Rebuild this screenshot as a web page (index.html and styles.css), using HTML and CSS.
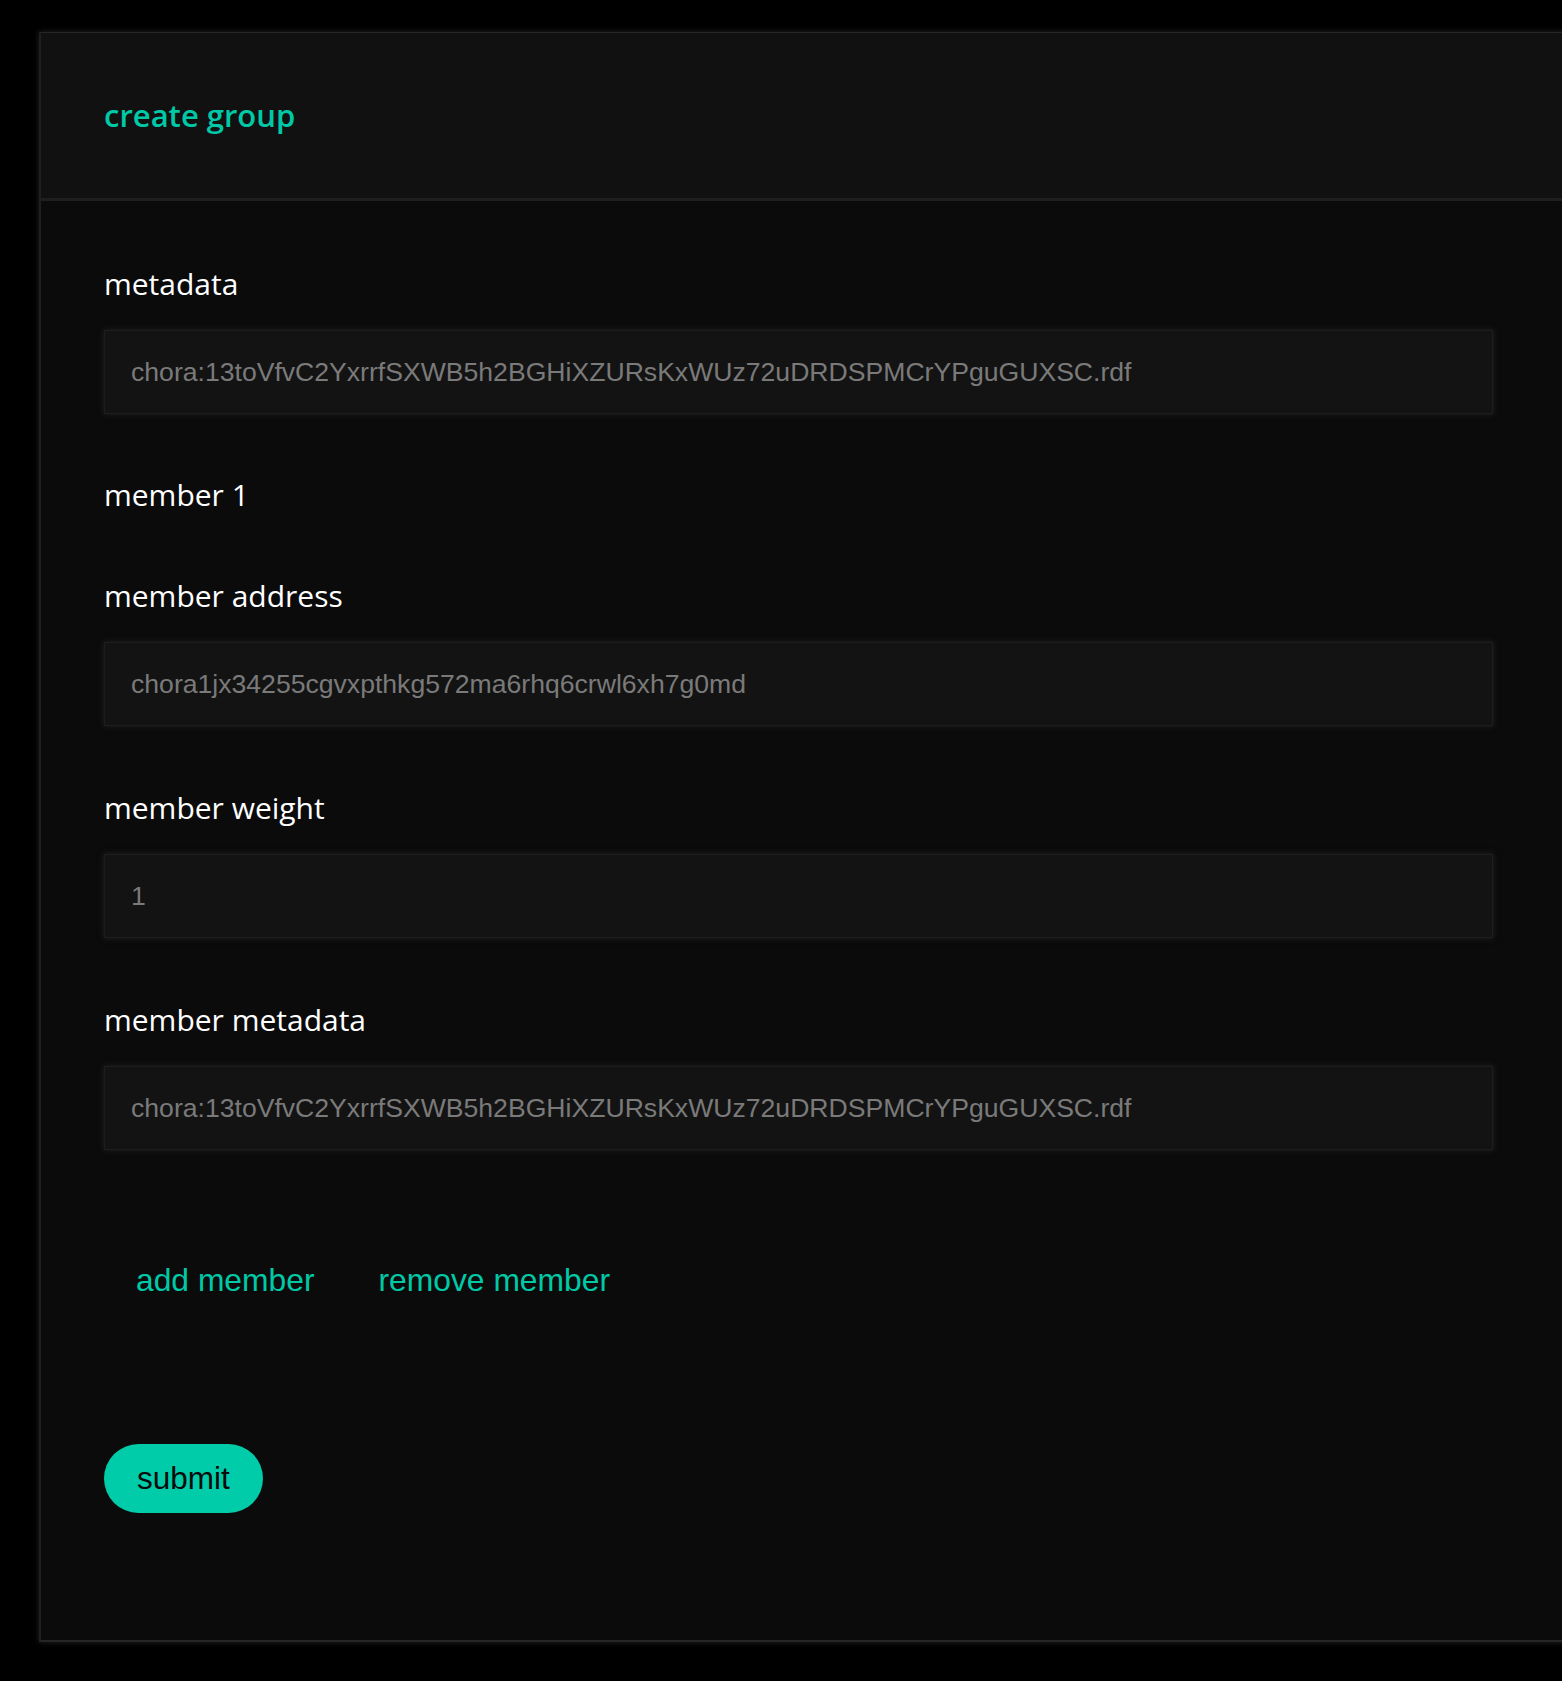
FILE: index.html
```html
<!DOCTYPE html>
<html lang="en">
<head>
<meta charset="utf-8">
<title>create group</title>
<link rel="stylesheet" href="styles.css">
</head>
<body>
<div class="panel">
  <div class="panel-header">
    <h2 class="panel-title">create group</h2>
  </div>
  <form class="panel-body">
    <div class="field">
      <label class="field-label">metadata</label>
      <input class="field-input" type="text" placeholder="chora:13toVfvC2YxrrfSXWB5h2BGHiXZURsKxWUz72uDRDSPMCrYPguGUXSC.rdf">
    </div>
    <div class="member-title">member 1</div>
    <div class="field field-first">
      <label class="field-label">member address</label>
      <input class="field-input" type="text" placeholder="chora1jx34255cgvxpthkg572ma6rhq6crwl6xh7g0md">
    </div>
    <div class="field">
      <label class="field-label">member weight</label>
      <input class="field-input" type="text" placeholder="1">
    </div>
    <div class="field">
      <label class="field-label">member metadata</label>
      <input class="field-input" type="text" placeholder="chora:13toVfvC2YxrrfSXWB5h2BGHiXZURsKxWUz72uDRDSPMCrYPguGUXSC.rdf">
    </div>
    <div class="member-actions">
      <button type="button" class="text-button">add member</button>
      <button type="button" class="text-button">remove member</button>
    </div>
    <button type="button" class="submit-button">submit</button>
  </form>
</div>
</body>
</html>
```
FILE: styles.css
```css
html, body {
  margin: 0;
  padding: 0;
  background: #000;
  overflow: hidden;
}

body {
  padding: 32px 0 40px 39px;
}

.panel {
  width: 1600px;
  border-top: 1px solid #262626;
  border-left: 2px solid #1f1f1f;
  border-bottom: 2px solid #262626;
  box-shadow: 0 0 6px rgba(60, 60, 60, 0.6);
}

.panel-header {
  background: #111111;
  height: 168px;
  padding: 0 63px 2px;
  box-sizing: border-box;
  display: flex;
  align-items: center;
  border-bottom: 3px solid #1f1f1f;
}

.panel-title {
  margin: 0;
  font-family: "Open Sans", "Noto Sans", sans-serif;
  font-weight: 600;
  font-size: 31px;
  color: #00c9a7;
  line-height: 40px;
}

.panel-body {
  display: flex;
  flex-direction: column;
  align-items: flex-start;
  background: #0b0b0b;
  padding: 1px 63px 127px;
}

.field {
  display: flex;
  flex-direction: column;
  margin-top: 62px;
}

.field-first {
  margin-top: 61px;
}

.field-label,
.member-title {
  font-family: "Open Sans", "Noto Sans", sans-serif;
  font-size: 30px;
  line-height: 40px;
  color: #ffffff;
  margin-bottom: 26px;
}

.member-title {
  margin-top: 61px;
  margin-bottom: 0;
}

.field-input {
  box-sizing: border-box;
  width: 1389px;
  height: 84px;
  margin: 0;
  padding: 0 26px;
  background: #131313;
  border: 1px solid #1d1d1d;
  box-shadow: 0 0 6px rgba(40, 40, 40, 0.9);
  font-family: "Liberation Sans", Arial, sans-serif;
  font-size: 26.6px;
  color: #7a7a7a;
  outline: none;
}

.field-input::placeholder {
  color: #7a7a7a;
  opacity: 1;
}

.member-actions {
  display: flex;
  margin-top: 96px;
}

.text-button {
  background: none;
  border: none;
  height: 68px;
  padding: 0 32px;
  font-family: "Liberation Sans", Arial, sans-serif;
  font-size: 31.8px;
  color: #00c9a7;
  cursor: pointer;
}

.submit-button {
  margin-top: 130px;
  height: 69px;
  padding: 0 33px;
  border: none;
  border-radius: 35px;
  background: #00cca9;
  color: #0b0b0b;
  font-family: "Liberation Sans", Arial, sans-serif;
  font-size: 31.5px;
  cursor: pointer;
}
```
